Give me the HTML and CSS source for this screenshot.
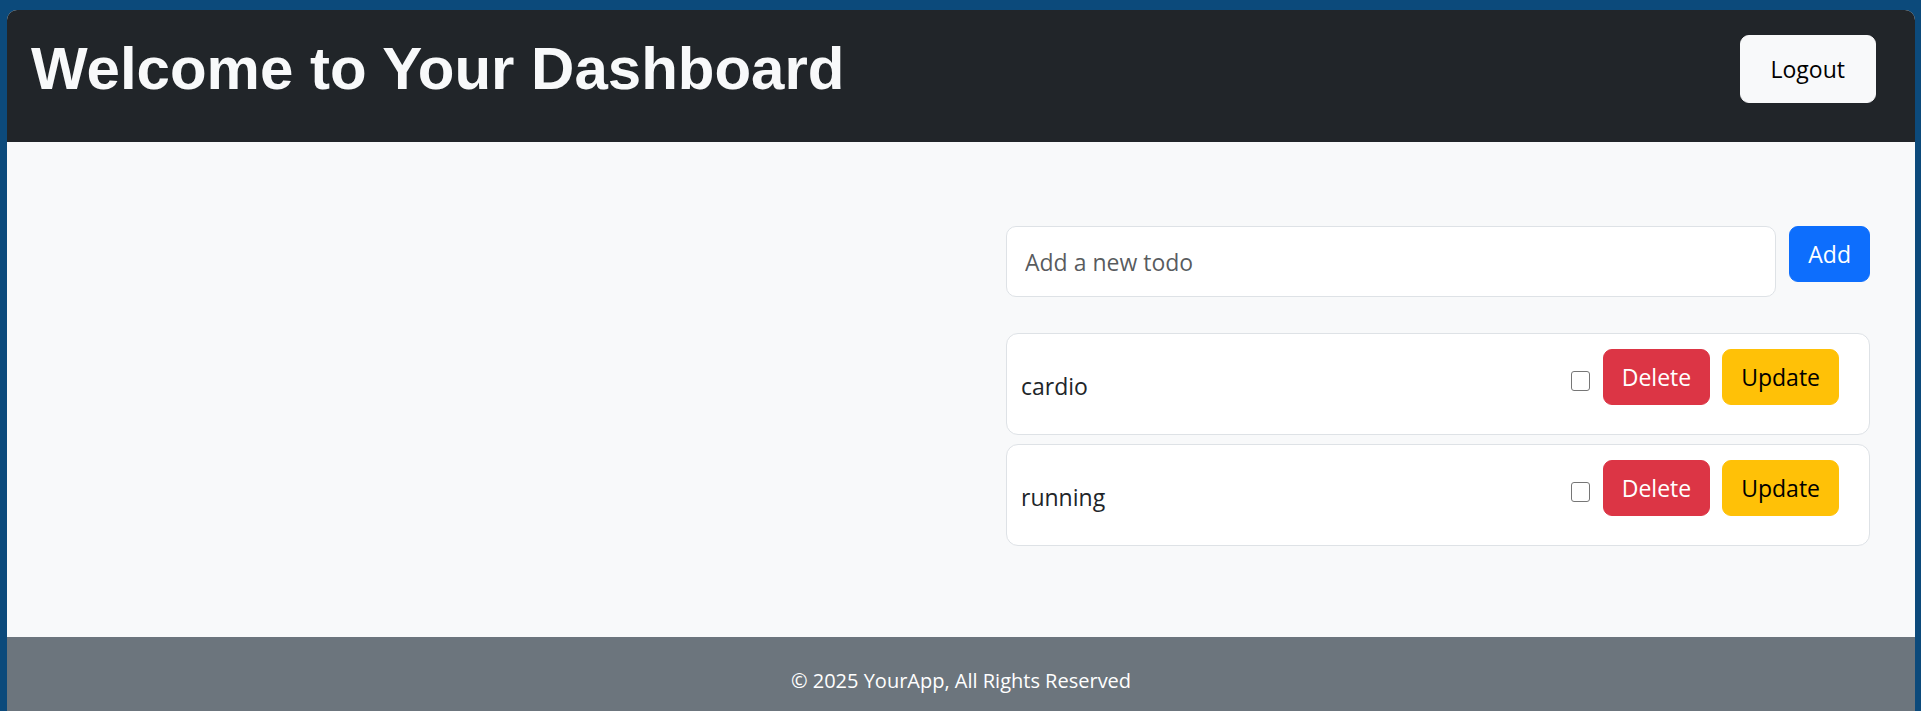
FILE: index.html
```html
<!DOCTYPE html>
<html lang="en">
<head>
<meta charset="utf-8">
<title>Dashboard</title>
<link rel="stylesheet" href="styles.css">
</head>
<body>
<div class="app">
  <header class="topbar">
    <h1 class="title">Welcome to Your Dashboard</h1>
    <button class="btn btn-light">Logout</button>
  </header>
  <main class="main">
    <div class="col-left"></div>
    <section class="col-right">
      <form class="add-form">
        <input class="todo-input" type="text" placeholder="Add a new todo">
        <button type="button" class="btn btn-primary">Add</button>
      </form>
      <ul class="todo-list">
        <li class="todo-item">
          <span class="todo-text">cardio</span>
          <div class="todo-actions">
            <input type="checkbox" class="todo-check">
            <button class="btn btn-danger">Delete</button>
            <button class="btn btn-warning">Update</button>
          </div>
        </li>
        <li class="todo-item">
          <span class="todo-text">running</span>
          <div class="todo-actions">
            <input type="checkbox" class="todo-check">
            <button class="btn btn-danger">Delete</button>
            <button class="btn btn-warning">Update</button>
          </div>
        </li>
      </ul>
    </section>
  </main>
  <footer class="footer">
    <p class="footer-text">© 2025 YourApp, All Rights Reserved</p>
  </footer>
</div>
</body>
</html>
```

FILE: styles.css
```css
* {
  box-sizing: border-box;
}

html, body {
  margin: 0;
  overflow: hidden;
}

body {
  background: #0c4a7b;
  padding: 10px 6px 0 7px;
  font-family: "Open Sans", "Noto Sans", sans-serif;
  color: #212529;
}

.app {
  background: #f8f9fa;
  border-radius: 10px 10px 0 0;
  overflow: hidden;
}

.topbar {
  background: #212529;
  display: flex;
  align-items: center;
  justify-content: space-between;
  padding: 23px 39px 37px 24px;
}

.title {
  margin: 0;
  font-family: "Liberation Sans", Arial, sans-serif;
  font-weight: 700;
  font-size: 60px;
  line-height: 72px;
  color: #f8f9fa;
}

.btn {
  font-family: "Open Sans", "Noto Sans", sans-serif;
  font-size: 23px;
  line-height: 36px;
  padding: 9px 18px;
  border: 1px solid transparent;
  border-radius: 9px;
  cursor: pointer;
}

.btn-light {
  background: #f8f9fa;
  border-color: #f8f9fa;
  color: #000;
  padding: 15px 30px;
}

.btn-primary {
  background: #0d6efd;
  border-color: #0d6efd;
  color: #fff;
}

.btn-danger {
  background: #dc3545;
  border-color: #dc3545;
  color: #fff;
}

.btn-warning {
  background: #ffc107;
  border-color: #ffc107;
  color: #000;
}

.main {
  display: grid;
  grid-template-columns: 1fr 1fr;
  padding: 84px 0 91px;
}

.col-right {
  padding: 0 45px;
}

.add-form {
  display: flex;
  align-items: flex-start;
  gap: 13px;
  margin: 0 0 36px;
}

.todo-input {
  flex: 1;
  height: 71px;
  padding: 16px 18px;
  font-family: "Open Sans", "Noto Sans", sans-serif;
  font-size: 23px;
  line-height: 36px;
  color: #212529;
  background: #fff;
  border: 1px solid #dee2e6;
  border-radius: 10px;
  outline: none;
}

.todo-input::placeholder {
  color: rgba(33, 37, 41, 0.75);
}

.todo-list {
  list-style: none;
  margin: 0;
  padding: 0;
  display: flex;
  flex-direction: column;
  gap: 9px;
}

.todo-item {
  display: flex;
  align-items: center;
  justify-content: space-between;
  height: 102px;
  padding: 0 30px 0 14px;
  background: #fff;
  border: 1px solid #dee2e6;
  border-radius: 12px;
}

.todo-text {
  font-size: 23px;
  line-height: 36px;
  margin-top: 4px;
}

.todo-actions {
  display: flex;
  align-items: center;
  gap: 12px;
  margin-bottom: 14px;
}

.todo-check {
  appearance: none;
  -webkit-appearance: none;
  width: 19px;
  height: 20px;
  margin: 8px 1px 0 0;
  background: #fff;
  border: 1.5px solid #767676;
  border-radius: 3px;
}

.footer {
  background: #6c757d;
  padding: 29px 0 15px;
  text-align: center;
}

.footer-text {
  margin: 0;
  font-size: 20px;
  line-height: 30px;
  color: #fff;
}
```
